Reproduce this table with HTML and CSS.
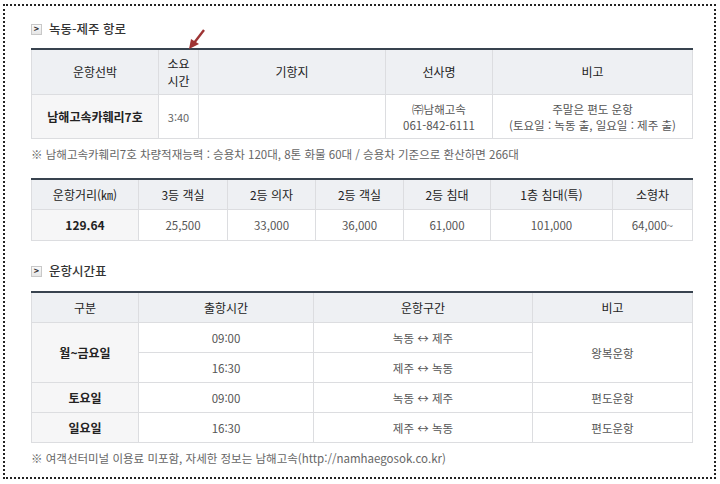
FILE: index.html
```html
<!DOCTYPE html>
<html lang="ko">
<head>
<meta charset="utf-8">
<link rel="stylesheet" href="styles.css">
</head>
<body>
<div class="frame">
  <h3 class="title"><span class="ico">&gt;</span>녹동-제주 항로</h3>
  <svg class="arrow" width="20" height="22" viewBox="0 0 20 22">
    <line x1="16" y1="1" x2="6" y2="14" stroke="#9e3434" stroke-width="2.4"/>
    <polygon points="1,20 3,10 11,15" fill="#9e3434"/>
  </svg>
  <table class="tbl t1">
    <colgroup><col style="width:127px"><col style="width:40px"><col style="width:187px"><col style="width:107px"><col style="width:200px"></colgroup>
    <thead>
      <tr><th>운항선박</th><th class="two">소요<br>시간</th><th>기항지</th><th>선사명</th><th>비고</th></tr>
    </thead>
    <tbody>
      <tr><td class="key">남해고속카훼리7호</td><td class="small">3:40</td><td></td><td>㈜남해고속<br>061-842-6111</td><td>주말은 편도 운항<br>(토요일 : 녹동 출, 일요일 : 제주 출)</td></tr>
    </tbody>
  </table>
  <p class="note n1">※ 남해고속카훼리7호 차량적재능력 : 승용차 120대, 8톤 화물 60대 / 승용차 기준으로 환산하면 266대</p>
  <table class="tbl t2">
    <colgroup><col style="width:107px"><col style="width:89px"><col style="width:88px"><col style="width:88px"><col style="width:87px"><col style="width:122px"><col style="width:80px"></colgroup>
    <thead>
      <tr><th>운항거리(㎞)</th><th>3등 객실</th><th>2등 의자</th><th>2등 객실</th><th>2등 침대</th><th>1층 침대(특)</th><th>소형차</th></tr>
    </thead>
    <tbody>
      <tr><td class="key">129.64</td><td>25,500</td><td>33,000</td><td>36,000</td><td>61,000</td><td>101,000</td><td>64,000~</td></tr>
    </tbody>
  </table>
  <h3 class="title t-second"><span class="ico">&gt;</span>운항시간표</h3>
  <table class="tbl t3">
    <colgroup><col style="width:107px"><col style="width:175px"><col style="width:219px"><col style="width:160px"></colgroup>
    <thead>
      <tr><th>구분</th><th>출항시간</th><th>운항구간</th><th>비고</th></tr>
    </thead>
    <tbody>
      <tr><td class="key" rowspan="2">월~금요일</td><td>09:00</td><td>녹동 ↔ 제주</td><td rowspan="2">왕복운항</td></tr>
      <tr><td>16:30</td><td>제주 ↔ 녹동</td></tr>
      <tr><td class="key">토요일</td><td>09:00</td><td>녹동 ↔ 제주</td><td>편도운항</td></tr>
      <tr><td class="key">일요일</td><td>16:30</td><td>제주 ↔ 녹동</td><td>편도운항</td></tr>
    </tbody>
  </table>
  <p class="note n2">※ 여객선터미널 이용료 미포함, 자세한 정보는 남해고속(http://namhaegosok.co.kr)</p>
</div>
</body>
</html>
```
FILE: styles.css
```css
html, body {
  margin: 0;
  padding: 0;
  background: #fff;
}
body {
  font-family: "Noto Sans CJK KR", "Noto Sans", sans-serif;
  font-size: 12px;
  color: #444;
}
.frame {
  position: relative;
  box-sizing: border-box;
  margin: 4px 0 0 3px;
  width: 713px;
  height: 475px;
  border: 2px dotted #222;
  padding: 15px 0 0 26px;
}
.title {
  margin: 0;
  display: flex;
  align-items: center;
  gap: 7px;
  font-size: 12.5px;
  font-weight: 500;
  color: #333;
  height: 16px;
  line-height: 16px;
}
.ico {
  box-sizing: border-box;
  width: 11px;
  height: 11px;
  border: 1px solid #c8c8c8;
  background: linear-gradient(#fafafa, #e6e6e6);
  font-size: 9px;
  line-height: 8px;
  font-weight: bold;
  text-align: center;
  color: #333;
}
.arrow {
  position: absolute;
  left: 183px;
  top: 23px;
}
.tbl {
  border-collapse: collapse;
  table-layout: fixed;
  width: 661px;
  border-top: 2px solid #38434f;
}
.tbl th, .tbl td {
  border: 1px solid #dcdde0;
  text-align: center;
  vertical-align: middle;
  padding: 0;
  line-height: 16px;
}
.tbl th {
  background: #eef0f3;
  font-weight: normal;
  color: #222;
  font-size: 12px;
}
.tbl th.two {
  line-height: 17px;
}
.tbl td {
  color: #555;
  font-size: 11.5px;
}
.tbl td.key {
  background: #f6f6f7;
  font-weight: bold;
  color: #222;
  font-size: 12px;
}
.tbl td.small {
  font-size: 11px;
  color: #666;
}
.t1 {
  margin-top: 11px;
}
.t1 th { height: 44px; }
.t1 td { height: 43px; }
.note {
  margin: 0;
  font-size: 11.5px;
  color: #666;
  line-height: 15px;
}
.n1 { margin-top: 8px; }
.t2 { margin-top: 16px; }
.t2 th { height: 29px; }
.t2 td { height: 30px; }
.t-second { margin-top: 22px; }
.t3 { margin-top: 12px; }
.t3 th { height: 29px; }
.t3 td { height: 29px; }
.n2 { margin-top: 8px; }
```
